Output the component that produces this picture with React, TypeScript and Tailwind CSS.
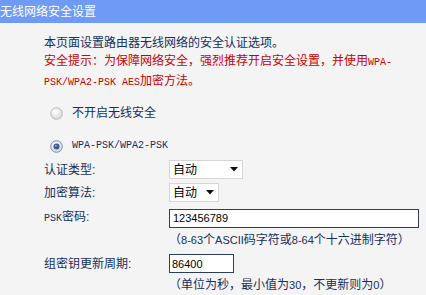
const cjk = "font-['Liberation_Sans','Noto_Sans_CJK_SC',sans-serif]";
const mono = "font-['Liberation_Mono',monospace] text-[10px]";

function Radio({ checked }: { checked?: boolean }) {
  return (
    <svg width="13" height="13" viewBox="0 0 13 13" className="shrink-0">
      <defs>
        <radialGradient id={checked ? "rg1" : "rg0"} cx="0.4" cy="0.35" r="0.7">
          <stop offset="0" stopColor="#ffffff" />
          <stop offset="1" stopColor={checked ? "#c9d4e6" : "#d6d6d6"} />
        </radialGradient>
      </defs>
      <circle cx="6.5" cy="6.5" r="5.8" fill={`url(#${checked ? "rg1" : "rg0"})`} stroke={checked ? "#7f8fa8" : "#b8b8b8"} strokeWidth="1" />
      {checked && <circle cx="6.5" cy="6.5" r="3" fill="#3a5a8c" />}
      {checked && <circle cx="5.8" cy="5.8" r="1" fill="#8fb0e0" />}
    </svg>
  );
}

function Select({ width }: { width: string }) {
  return (
    <div className={`flex h-[19px] ${width} items-center justify-between border border-[#d6d6d6] bg-white pl-[3px] pr-[4px] text-[12px] text-black`}>
      <span>自动</span>
      <svg width="8" height="5" viewBox="0 0 8 5">
        <polygon points="0,0 8,0 4,4.5" fill="#111" />
      </svg>
    </div>
  );
}

export default function App() {
  return (
    <div className={`h-[295px] w-[426px] overflow-hidden bg-[#f4f4f4] ${cjk} text-[12px] leading-[18px] text-[#152f5e]`}>
      <div className="flex h-[23px] items-center bg-[#6f9af6] text-[12px] text-white">
        <span className="whitespace-nowrap">无线网络安全设置</span>
      </div>

      <div className="pl-[44px] pt-[11px]">
        <div className="whitespace-nowrap">本页面设置路由器无线网络的安全认证选项。</div>
        <div className="whitespace-nowrap text-[#cc0000]">
          安全提示：为保障网络安全，强烈推荐开启安全设置，并使用<span className={mono}>WPA-</span>
          <br />
          <span className={mono}>PSK/WPA2-PSK AES</span>加密方法。
        </div>

        <div className="mt-[12px] flex h-[18px] items-center gap-[3px] pl-[6px]">
          <Radio />
          <span className="ml-[6px]">不开启无线安全</span>
        </div>

        <div className="mt-[15px] flex h-[18px] items-center gap-[3px] pl-[6px]">
          <Radio checked />
          <span className={`ml-[6px] ${mono}`}>WPA-PSK/WPA2-PSK</span>
        </div>

        <div className="mt-[5px] flex items-center">
          <div className="w-[125px]">认证类型:</div>
          <Select width="w-[74px]" />
        </div>

        <div className="mt-[4px] flex items-center">
          <div className="w-[125px]">加密算法:</div>
          <Select width="w-[50px]" />
        </div>

        <div className="mt-[6px] flex items-center">
          <div className="w-[125px]">
            <span className={mono}>PSK</span>密码:
          </div>
          <div className="flex h-[19px] w-[250px] items-center border border-[#2b3c60] bg-white pl-[3px] font-['Liberation_Sans',sans-serif] text-[11px] text-black">
            123456789
          </div>
        </div>

        <div className="mt-[3px] whitespace-nowrap pl-[125px] text-[12px]">
          （<span className="text-[11px]">8-63</span>个<span className="text-[11px]">ASCII</span>码字符或<span className="text-[11px]">8-64</span>个十六进制字符）
        </div>

        <div className="mt-[5px] flex items-center">
          <div className="w-[125px]">组密钥更新周期:</div>
          <div className="flex h-[19px] w-[65px] items-center border border-[#2b3c60] bg-white pl-[2px] font-['Liberation_Sans',sans-serif] text-[11px] text-black">
            86400
          </div>
        </div>

        <div className="mt-[3px] whitespace-nowrap pl-[125px]">
          （单位为秒，最小值为<span className="text-[11px]">30</span>，不更新则为<span className="text-[11px]">0</span>）
        </div>
      </div>
    </div>
  );
}
